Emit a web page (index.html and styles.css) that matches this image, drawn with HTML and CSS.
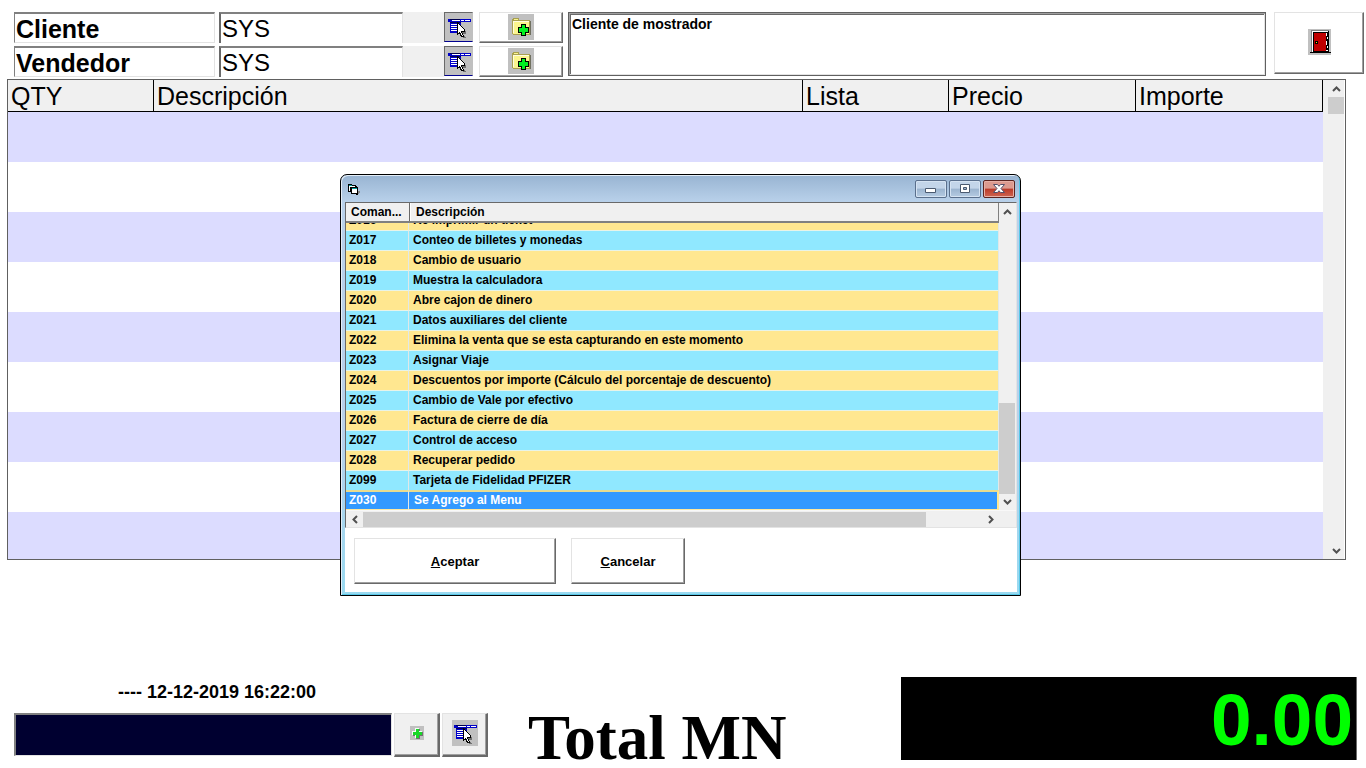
FILE: index.html
```html
<!DOCTYPE html>
<html lang="es">
<head>
<meta charset="utf-8">
<title>Punto de venta</title>
<link rel="stylesheet" href="styles.css">
</head>
<body>
<svg class="symbols" aria-hidden="true">
  <symbol id="menu" viewBox="0 0 26 26">
    <path fill="#0000c8" d="M2 5h23v3H2z"/>
    <path fill="#fff" d="M6 6h8v1H6zM15 6h3v1h-3zM19 6h5v1h-5z"/>
    <path fill="#000050" d="M4 5h10v1H4zM4 8h11v1H4z"/>
    <path fill="#0000c8" d="M4 9h11v10H4z"/>
    <path fill="#fff" d="M5 10h9v1H5zM5 12h9v1H5zM5 14h9v1H5zM5 16h9v1H5z"/>
    <path fill="#707070" d="M14 11l6 7v2h-3l3 4h-3l-3-4z"/>
    <path fill="#000" d="M11 8h1l7 8v2h-3l2 4v1h-3l-2-4-2 2z"/>
    <path fill="#fff" d="M12 10h1v1h1v1h1v1h1v1h1v1h1v2h-3v2h1v2h1v1h-1v-1h-1v-2h-1v-1h-1v1h-1z"/>
  </symbol>
  <symbol id="folder" viewBox="0 0 26 26">
    <path fill="#707060" d="M6 21h17V7h-1v13H6z"/>
    <path fill="#a8a050" d="M4 5h1V4h6v2h11v15H5v-1H4z"/>
    <path fill="#fbf58e" d="M5 7h16v13H5zM6 5h4v1H6z"/>
    <path fill="#fffde0" d="M5 7h16v1H5zM5 7h1v12H5z"/>
    <path fill="#000" d="M13 10h5v3h3v6h-3v3h-5v-3h-3v-6h3z"/>
    <path fill="#00f020" d="M14 11h3v3h3v4h-3v3h-3v-3h-3v-4h3z"/>
  </symbol>
  <symbol id="door" viewBox="0 0 23 26">
    <path fill="#808080" d="M3 1h18v1H3zM3 1h1v22H3z"/>
    <path fill="#fff" d="M4 2h16v21H4z"/>
    <path fill="#000" d="M5 3h15v20H5zM2 23h21v1H2zM20 2h1v21h-1z"/>
    <path fill="#c00000" d="M6 4h12v18H6z"/>
    <path fill="#fff" d="M18 4h1v3h-1zM19 8h1v2h-1zM18 12h1v4h-1zM19 17h1v2h-1zM18 21h2v1h-2z"/>
    <path fill="#000" d="M7 12h3v3H7z"/><path fill="#ffe000" d="M8 13h1v1H8z"/>
  </symbol>
  <symbol id="plus" viewBox="0 0 14 14">
    <path fill="#707070" d="M6 3h4v3h3v4h-3v3H6v-3H3V6h3z"/>
    <path fill="#f4fff4" d="M5 2h4v3h3v4H9v3H5V9H2V5h3z"/>
    <path fill="#18d828" d="M6 3h3v3h3v3H9v3H6V9H3V6h3z"/>
  </symbol>
  <symbol id="up" viewBox="0 0 9 6"><path fill="none" stroke="#505050" stroke-width="2" d="M1 5l3.500-3.500L8 5"/></symbol>
  <symbol id="down" viewBox="0 0 9 6"><path fill="none" stroke="#505050" stroke-width="2" d="M1 1l3.500 3.500L8 1"/></symbol>
  <symbol id="left" viewBox="0 0 6 9"><path fill="none" stroke="#505050" stroke-width="2" d="M5 1L1.500 4.500 5 8"/></symbol>
  <symbol id="right" viewBox="0 0 6 9"><path fill="none" stroke="#505050" stroke-width="2" d="M1 1l3.500 3.500L1 8"/></symbol>
</svg>

<header class="top">
  <div class="fields">
    <div class="field">
      <label class="caption" for="cliente">Cliente</label>
      <input class="code" id="cliente" value="SYS">
      <span class="filler"></span>
      <button class="lookup" aria-label="Buscar cliente"><svg class="icon"><use href="#menu"/></svg></button>
      <button class="raised add" aria-label="Nuevo cliente"><svg class="icon"><use href="#folder"/></svg></button>
    </div>
    <div class="field">
      <label class="caption" for="vendedor">Vendedor</label>
      <input class="code" id="vendedor" value="SYS">
      <span class="filler"></span>
      <button class="lookup" aria-label="Buscar vendedor"><svg class="icon"><use href="#menu"/></svg></button>
      <button class="raised add" aria-label="Nuevo vendedor"><svg class="icon"><use href="#folder"/></svg></button>
    </div>
  </div>
  <textarea class="memo" aria-label="Nombre del cliente">Cliente de mostrador</textarea>
  <button class="raised exit" aria-label="Salir"><svg class="icon icon-door"><use href="#door"/></svg></button>
</header>

<main class="sale">
  <table class="items">
    <colgroup><col class="c-qty"><col><col class="c-list"><col class="c-price"><col class="c-price"></colgroup>
    <thead><tr><th>QTY</th><th>Descripción</th><th>Lista</th><th>Precio</th><th>Importe</th></tr></thead>
    <tbody>
      <tr><td colspan="5"></td></tr><tr><td colspan="5"></td></tr><tr><td colspan="5"></td></tr>
      <tr><td colspan="5"></td></tr><tr><td colspan="5"></td></tr><tr><td colspan="5"></td></tr>
      <tr><td colspan="5"></td></tr><tr><td colspan="5"></td></tr><tr class="cut"><td colspan="5"></td></tr>
    </tbody>
  </table>
  <div class="vbar sale-bar">
    <button class="arrow" aria-label="Subir"><svg class="ar-v"><use href="#up"/></svg></button>
    <span class="thumb sale-thumb"></span>
    <span class="track"></span>
    <button class="arrow" aria-label="Bajar"><svg class="ar-v"><use href="#down"/></svg></button>
  </div>
</main>

<footer class="bottom">
  <div class="entry">
    <label class="stamp" for="comando">---- 12-12-2019 16:22:00</label>
    <div class="entry-row">
      <input class="command" id="comando">
      <button class="raised gray" aria-label="Agregar"><svg class="icon icon-plus"><use href="#plus"/></svg></button>
      <button class="raised gray" aria-label="Menú"><svg class="icon"><use href="#menu"/></svg></button>
    </div>
  </div>
  <div class="total-label">Total MN</div>
  <output class="total">0.00</output>
</footer>

<section class="dialog" role="dialog" aria-label="Comandos">
  <div class="titlebar">
    <svg class="form-icon" viewBox="0 0 13 12"><path fill="#888" d="M11 8h2v2h-1v1h-1z"/><path fill="#000" d="M1 1h4v1h4v1h1v1h1v8H9v-1H4V9H1z"/><path fill="#fff" d="M2 3h6v1H3v4H2zM5 6h5v4H5z"/><path fill="#00a0a0" d="M2 2h3v1H2zM5 5h5v1H5z"/></svg>
    <div class="winbtns">
      <button class="win" aria-label="Minimizar"><svg class="glyph" viewBox="0 0 14 12"><path fill="#fff" stroke="#4a5a70" d="M1.500 5.500h10v4h-10z"/></svg></button>
      <button class="win" aria-label="Maximizar"><svg class="glyph" viewBox="0 0 14 12"><path fill="#fff" stroke="#4a5a70" d="M2.500 1.500h9v8h-9z"/><path fill="#9db4cf" stroke="#4a5a70" d="M5.500 4.500h3v2h-3z"/></svg></button>
      <button class="win close" aria-label="Cerrar"><svg class="glyph" viewBox="0 0 14 12"><path fill="#fff" stroke="#54506a" d="M1.500 1.500h4L7 3.300l1.500-1.800h4L9 5.500l3.500 4h-4L7 7.700 5.500 9.500h-4l3.500-4z"/></svg></button>
    </div>
  </div>
  <div class="list">
    <div class="list-main">
      <div class="list-head"><span class="h-code">Coman...</span><span class="h-desc">Descripción</span></div>
      <div class="viewport">
        <table class="commands">
          <colgroup><col class="c-code"><col></colgroup>
          <tbody>
            <tr><td>Z016</td><td>Re imprimir un ticket</td></tr>
            <tr><td>Z017</td><td>Conteo de billetes y monedas</td></tr>
            <tr><td>Z018</td><td>Cambio de usuario</td></tr>
            <tr><td>Z019</td><td>Muestra la calculadora</td></tr>
            <tr><td>Z020</td><td>Abre cajon de dinero</td></tr>
            <tr><td>Z021</td><td>Datos auxiliares del cliente</td></tr>
            <tr><td>Z022</td><td>Elimina la venta que se esta capturando en este momento</td></tr>
            <tr><td>Z023</td><td>Asignar Viaje</td></tr>
            <tr><td>Z024</td><td>Descuentos por importe (Cálculo del porcentaje de descuento)</td></tr>
            <tr><td>Z025</td><td>Cambio de Vale por efectivo</td></tr>
            <tr><td>Z026</td><td>Factura de cierre de día</td></tr>
            <tr><td>Z027</td><td>Control de acceso</td></tr>
            <tr><td>Z028</td><td>Recuperar pedido</td></tr>
            <tr><td>Z099</td><td>Tarjeta de Fidelidad PFIZER</td></tr>
            <tr class="selected"><td>Z030</td><td>Se Agrego al Menu</td></tr>
          </tbody>
        </table>
      </div>
    </div>
    <div class="vbar list-bar">
      <button class="arrow" aria-label="Subir lista"><svg class="ar-v"><use href="#up"/></svg></button>
      <span class="track"></span>
      <span class="thumb list-thumb"></span>
      <button class="arrow" aria-label="Bajar lista"><svg class="ar-v"><use href="#down"/></svg></button>
    </div>
    <div class="hbar">
      <button class="arrow" aria-label="Izquierda"><svg class="ar-h"><use href="#left"/></svg></button>
      <span class="thumb h-thumb"></span>
      <span class="track"></span>
      <button class="arrow" aria-label="Derecha"><svg class="ar-h"><use href="#right"/></svg></button>
    </div>
  </div>
  <div class="actions">
    <button class="raised action accept"><u>A</u>ceptar</button>
    <button class="raised action"><u>C</u>ancelar</button>
  </div>
</section>
</body>
</html>
```
FILE: styles.css
```css
* { box-sizing: border-box; }

body {
  margin: 0;
  min-height: 100vh;
  display: flex;
  flex-direction: column;
  position: relative;
  background: #fff;
  color: #000;
  font-family: "Liberation Sans", Arial, sans-serif;
}

button, input, textarea { font: inherit; color: inherit; margin: 0; padding: 0; border-radius: 0; outline: 0; }
button { border: 0; background: none; display: flex; align-items: center; justify-content: center; }
.symbols { display: none; }

.icon { display: block; flex: none; width: 26px; height: 26px; background: #c0c0c0; shape-rendering: crispEdges; }
.icon-door { width: 23px; }
.icon-plus { width: 14px; height: 14px; }

.raised {
  background: #fff;
  border: 1px solid #e3e3e3;
  border-right-color: #696969;
  border-bottom-color: #696969;
  box-shadow: inset -1px -1px #a0a0a0;
}
.gray { background: #f0f0f0; width: 46px; height: 44px; padding: 0 0 3px 0; border-width: 1px 2px 2px 1px; }

/* Customer and seller bar */
.top { display: flex; align-items: flex-start; padding: 12px 2px 0 14px; font-size: 25px; }
.fields { display: flex; flex-direction: column; gap: 3px; }
.field { display: flex; height: 31px; }
.caption {
  width: 201px; height: 31px; margin-right: 4px; padding-left: 1px;
  font-weight: bold; line-height: 30px; overflow: hidden;
  border: 1px solid #e3e3e3; border-top: 2px solid #808080; border-left-color: #808080;
}
.code {
  width: 184px; padding: 1px 0 0 1px; font-size: 24px;
  border: 1px solid #e3e3e3; border-top: 2px solid #808080; border-left: 2px solid #696969; border-bottom: 0;
}
.filler { width: 41px; background: #f0f0f0; }
.lookup {
  width: 29px; height: 30px; margin-right: 6px; background: #c0c0c0;
  border: 1px solid #c0c0c0; border-top-color: #696969; border-left-color: #696969; border-bottom-color: #000090;
}
.add { width: 84px; padding-bottom: 2px; }
.memo {
  flex: 1; height: 64px; margin: 0 8px 0 5px; padding: 3px; resize: none; overflow: hidden;
  font-size: 14px; font-weight: bold; line-height: 16px;
  border: 1px solid #606060; box-shadow: inset 1px 1px #a0a0a0, inset -1px -1px #e3e3e3, inset 2px 2px #696969;
}
.exit { width: 90px; height: 62px; padding-bottom: 2px; }

/* Sale grid */
.sale { display: flex; margin: 2px 20px 0 7px; border: 1px solid #606060; }
.items { flex: 1; border-collapse: separate; border-spacing: 0; table-layout: fixed; }
.c-qty, .c-list { width: 146px; }
.c-price { width: 187px; }
.items th {
  height: 32px; padding: 2px 0 0 3px; text-align: left; font-size: 25px; font-weight: normal; line-height: 29px;
  background: #f0f0f0; border-right: 1px solid #000; border-bottom: 1px solid #000;
}
.items td { height: 50px; padding: 0; }
.items .cut td { height: 47px; }
.items tbody tr:nth-child(odd) { background: #dcdcff; }

.vbar { display: flex; flex-direction: column; background: #f0f0f0; }
.hbar { display: flex; background: #f0f0f0; }
.arrow { width: 16px; height: 16px; flex: none; }
.ar-v { width: 9px; height: 6px; }
.ar-h { width: 6px; height: 9px; }
.thumb { background: #cdcdcd; }
.track { flex: 1; }
.sale-bar { width: 22px; padding: 1px 0 0 5px; border-right: 1px solid #fff; }
.sale-thumb { height: 17px; }

/* Command entry and total */
.bottom { display: flex; align-items: flex-end; margin-top: auto; padding: 0 9px 8px 14px; }
.entry { width: 474px; padding-bottom: 3px; }
.stamp { display: block; padding-left: 104px; margin-bottom: 11px; font-size: 18px; font-weight: bold; line-height: 20px; }
.entry-row { display: flex; gap: 2px; }
.command { flex: 1; min-width: 0; height: 43px; background: #000030; color: #fff; border: 1px solid #e3e3e3; border-top: 2px solid #808080; border-left: 2px solid #808080; }
.total-label { flex: 1; padding-left: 40px; font: bold 63px/44px "Liberation Serif", "Times New Roman", serif; }
.total {
  width: 456px; height: 83px; padding-right: 3px; text-align: right;
  background: #000; color: #0f0; border-right: 1px solid #696969;
  font-size: 73px; font-weight: bold; line-height: 86px;
}

/* Command list window */
.dialog {
  position: absolute; top: 174px; left: calc(50% - 343px); width: 681px;
  padding: 0 3px 3px 4px; border: 1px solid #000; border-radius: 7px 7px 0 0;
  background: linear-gradient(#98b4d2, #b9d1ea 27px, #b9d1ea 60%, #99d9f0);
  box-shadow: inset 1px 1px #e4eef8, inset -1px -1px #58c8e8;
  font-size: 12px; font-weight: bold;
}
.titlebar { display: flex; height: 27px; justify-content: space-between; padding: 5px 2px 0 2px; }
.form-icon { width: 13px; height: 12px; margin-top: 3px; shape-rendering: crispEdges; }
.winbtns { display: flex; gap: 2px; }
.win {
  width: 32px; height: 18px; border: 1px solid #5a6f8c; border-radius: 2px;
  background: linear-gradient(#c3d5e9 45%, #9bb4cf 50%, #b5cbe2); box-shadow: inset 0 0 0 1px #d5e3f2;
}
.close { background: linear-gradient(#dc9a8f 45%, #bb3a28 50%, #cf6552); border-color: #5b2420; box-shadow: inset 0 0 0 1px #e7b0a6; }
.glyph { width: 14px; height: 12px; flex: none; }

.list {
  display: grid; grid-template-columns: 1fr 17px; background: #fff;
  border: 1px solid #e3e3e3; border-top-color: #696969; border-left-color: #696969;
}
.list-head { display: flex; height: 20px; line-height: 19px; background: #f0f0f0; border-bottom: 2px solid #808080; border-right: 1px solid #808080; }
.h-code { width: 64px; padding-left: 5px; border-right: 1px solid #696969; }
.h-desc { padding-left: 5px; border-left: 1px solid #fff; }
.viewport { height: 287px; display: flex; flex-direction: column; justify-content: flex-end; overflow: hidden; }
.commands { flex: none; width: 100%; border-collapse: separate; border-spacing: 0; table-layout: fixed; }
.c-code { width: 63px; }
.commands td {
  height: 20px; padding: 0 0 2px 3px; line-height: 16px; white-space: nowrap;
  background: #90e8ff; border-top: 1px solid #e8f4e8; border-right: 1px solid #e0e8e8;
}
.commands td + td { padding-left: 4px; }
.commands tr:nth-child(odd) td { background: #ffe790; }
.commands tr.selected td { background: #3399ff; color: #fff; padding-bottom: 1px; border-top: 2px solid #e8dc90; border-bottom: 1px solid #ffe8a0; }
.commands tr.selected td + td { padding-left: 5px; border-right: 2px solid #ffe790; }
.list-bar { padding: 1px 1px 0 0; }
.list-thumb { height: 91px; }
.hbar { grid-column: 1 / -1; height: 17px; padding: 1px 17px 0 1px; border-top: 1px solid #f8f8f8; }
.h-thumb { width: 563px; }
.hbar .arrow { height: 15px; }

.actions { display: flex; gap: 15px; padding: 10px 9px 8px; background: #fff; }
.action { width: 114px; height: 46px; font-size: 13px; }
.accept { width: 202px; }
```
